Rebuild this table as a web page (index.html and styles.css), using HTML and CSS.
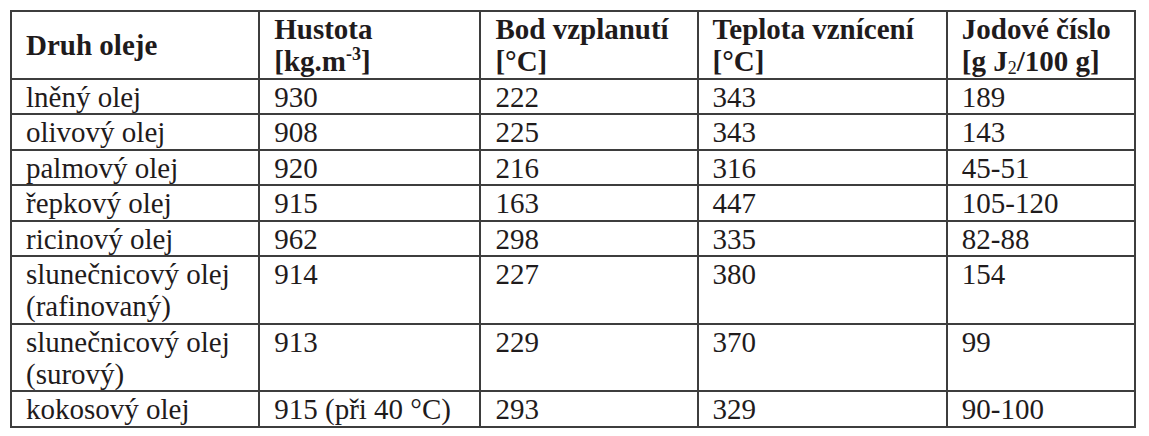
FILE: index.html
```html
<!DOCTYPE html>
<html lang="cs">
<head>
<meta charset="utf-8">
<title>Oleje</title>
<link rel="stylesheet" href="styles.css">
</head>
<body>
<div class="wrap">
<table class="oils">
  <colgroup>
    <col class="c1"><col class="c2"><col class="c3"><col class="c4"><col class="c5">
  </colgroup>
  <thead>
    <tr>
      <th>Druh oleje</th>
      <th>Hustota<br>[kg.m<sup>-3</sup>]</th>
      <th>Bod vzplanutí<br>[°C]</th>
      <th>Teplota vznícení<br>[°C]</th>
      <th>Jodové číslo<br>[g J<sub>2</sub>/100 g]</th>
    </tr>
  </thead>
  <tbody>
    <tr><td>lněný olej</td><td>930</td><td>222</td><td>343</td><td>189</td></tr>
    <tr><td>olivový olej</td><td>908</td><td>225</td><td>343</td><td>143</td></tr>
    <tr><td>palmový olej</td><td>920</td><td>216</td><td>316</td><td>45-51</td></tr>
    <tr><td>řepkový olej</td><td>915</td><td>163</td><td>447</td><td>105-120</td></tr>
    <tr><td>ricinový olej</td><td>962</td><td>298</td><td>335</td><td>82-88</td></tr>
    <tr><td>slunečnicový olej<br>(rafinovaný)</td><td>914</td><td>227</td><td>380</td><td>154</td></tr>
    <tr><td>slunečnicový olej<br>(surový)</td><td>913</td><td>229</td><td>370</td><td>99</td></tr>
    <tr><td>kokosový olej</td><td>915 (při 40 °C)</td><td>293</td><td>329</td><td>90-100</td></tr>
  </tbody>
</table>
</div>
</body>
</html>
```
FILE: styles.css
```css
html, body {
  margin: 0;
  padding: 0;
  background: #ffffff;
}
.wrap {
  padding: 10px 0 0 10px;
}
.oils {
  border-collapse: collapse;
  table-layout: fixed;
  width: 1126px;
  font-family: "Liberation Serif", "Times New Roman", serif;
  font-size: 29px;
  line-height: 32px;
  color: #1f1b1c;
}
.c1 { width: 248px; }
.c2 { width: 221px; }
.c3 { width: 217px; }
.c4 { width: 249px; }
.c5 { width: 188px; }
.oils th,
.oils td {
  border: 2px solid #3d3d3d;
  padding: 1px 4px 0.5px 14px;
  text-align: left;
  vertical-align: top;
  white-space: nowrap;
  overflow: hidden;
}
.oils th {
  font-weight: bold;
  vertical-align: middle;
}
.oils sup,
.oils sub {
  font-size: 18px;
  line-height: 0;
}
.oils sup { vertical-align: 11px; }
.oils sub { vertical-align: -3px; font-weight: normal; }
```
